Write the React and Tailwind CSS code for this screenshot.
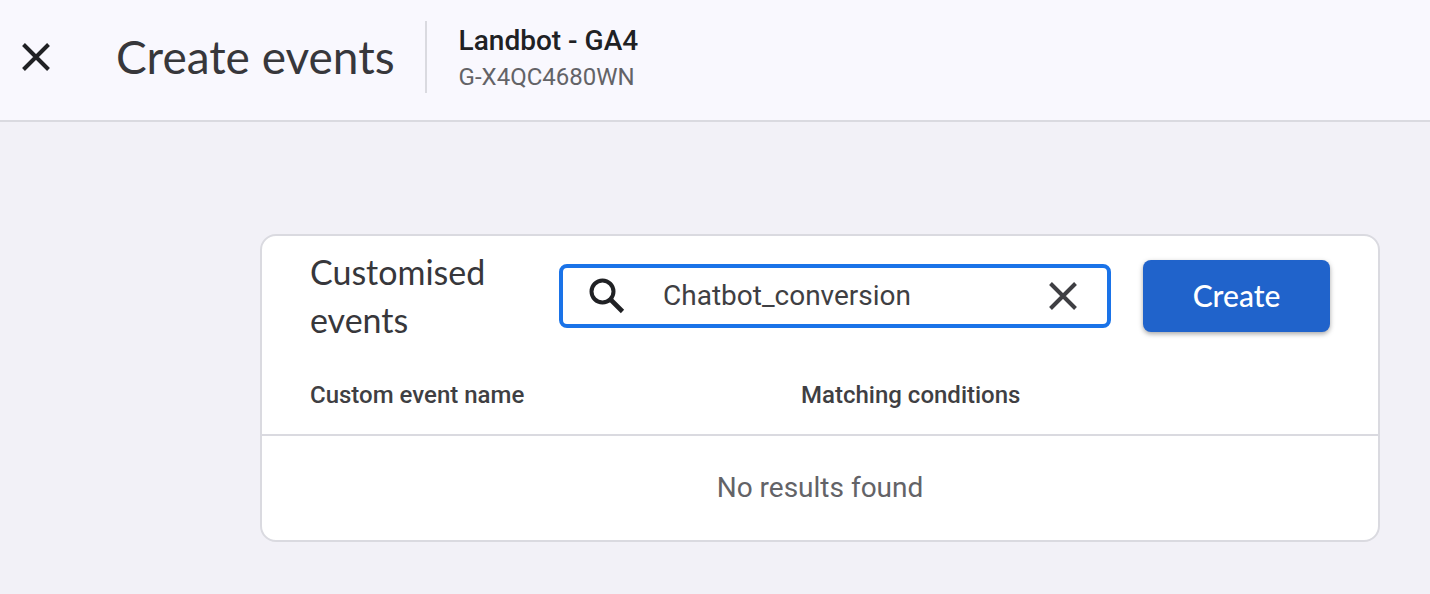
import React, { useState } from "react";

const CloseIcon = ({ className }) => (
  <svg viewBox="0 0 28 28" className={className} aria-hidden="true">
    <path
      d="M1.5 1.5L26.5 26.5M26.5 1.5L1.5 26.5"
      stroke="currentColor"
      strokeWidth="4"
      fill="none"
    />
  </svg>
);

const SearchIcon = ({ className }) => (
  <svg viewBox="0 0 36 36" className={className} aria-hidden="true">
    <circle
      cx="13.5"
      cy="13.5"
      r="11"
      stroke="currentColor"
      strokeWidth="4"
      fill="none"
    />
    <path
      d="M21.5 21.5L33.5 33.5"
      stroke="currentColor"
      strokeWidth="4.6"
      fill="none"
    />
  </svg>
);

const Header = () => (
  <header className="flex h-[122px] items-center border-b-2 border-[#dadae0] bg-[#f9f8fe] pb-1.5 pl-5">
    <button
      type="button"
      aria-label="Close"
      className="flex size-8 shrink-0 items-center justify-center text-[#202124]"
    >
      <CloseIcon className="size-7" />
    </button>
    <h1 className="ml-16 whitespace-nowrap font-[Lato,sans-serif] text-[46px] leading-[56px] text-[#37373b]">
      Create events
    </h1>
    <div className="ml-[30px] flex h-[72px] flex-col justify-center border-l-2 border-[#dadae0] pt-1 pl-8">
      <p className="text-[28px] leading-9 font-medium text-[#202124]">
        Landbot - GA4
      </p>
      <p className="text-[24px] leading-9 text-[#636367]">G-X4QC4680WN</p>
    </div>
  </header>
);

const EventsTable = () => (
  <table className="w-full table-fixed border-collapse text-left">
    <thead>
      <tr className="border-b-2 border-[#dadae0] text-[24px] leading-8 text-[#3f3f43]">
        <th scope="col" className="w-[44%] pt-[35px] pb-[23px] pl-12 font-medium">
          Custom event name
        </th>
        <th scope="col" className="pt-[35px] pb-[23px] pl-12 font-medium">
          Matching conditions
        </th>
      </tr>
    </thead>
    <tbody>
      <tr>
        <td
          colSpan={2}
          className="h-[105px] text-center text-[28px] leading-8 text-[#636367]"
        >
          No results found
        </td>
      </tr>
    </tbody>
  </table>
);

const App = () => {
  const [search, setSearch] = useState("Chatbot_conversion");

  return (
    <div className="min-h-screen bg-[#f2f1f7] font-[Roboto,sans-serif]">
      <Header />
      <main className="pt-28 pr-[50px] pb-12 pl-[260px]">
        <section className="overflow-hidden rounded-2xl border-2 border-[#dadae0] bg-white">
          <div className="flex items-center gap-8 pt-3 pr-12 pl-12">
            <h2 className="w-[217px] shrink-0 font-[Lato,sans-serif] text-[34px] leading-[48px] text-[#37373b]">
              Customised events
            </h2>
            <div className="flex h-16 min-w-0 flex-1 items-center rounded-lg border-4 border-[#1a73e8] pr-7 pl-[26px]">
              <SearchIcon className="size-9 shrink-0 text-[#202124]" />
              <input
                type="text"
                aria-label="Search events"
                value={search}
                onChange={(e) => setSearch(e.target.value)}
                className="ml-[38px] min-w-0 flex-1 bg-transparent text-[28px] leading-9 text-[#3f3f43] outline-none"
              />
              <button
                type="button"
                aria-label="Clear search"
                onClick={() => setSearch("")}
                className="flex size-8 shrink-0 items-center justify-center text-[#3f3f43]"
              >
                <CloseIcon className="size-7" />
              </button>
            </div>
            <button
              type="button"
              className="h-[72px] w-[187px] shrink-0 rounded-lg bg-[#2063cb] pb-0.5 font-[Lato,sans-serif] text-[30px] leading-9 font-medium text-white shadow-[0_2px_5px_rgba(0,0,0,0.35)]"
            >
              Create
            </button>
          </div>
          <EventsTable />
        </section>
      </main>
    </div>
  );
};

export default App;
